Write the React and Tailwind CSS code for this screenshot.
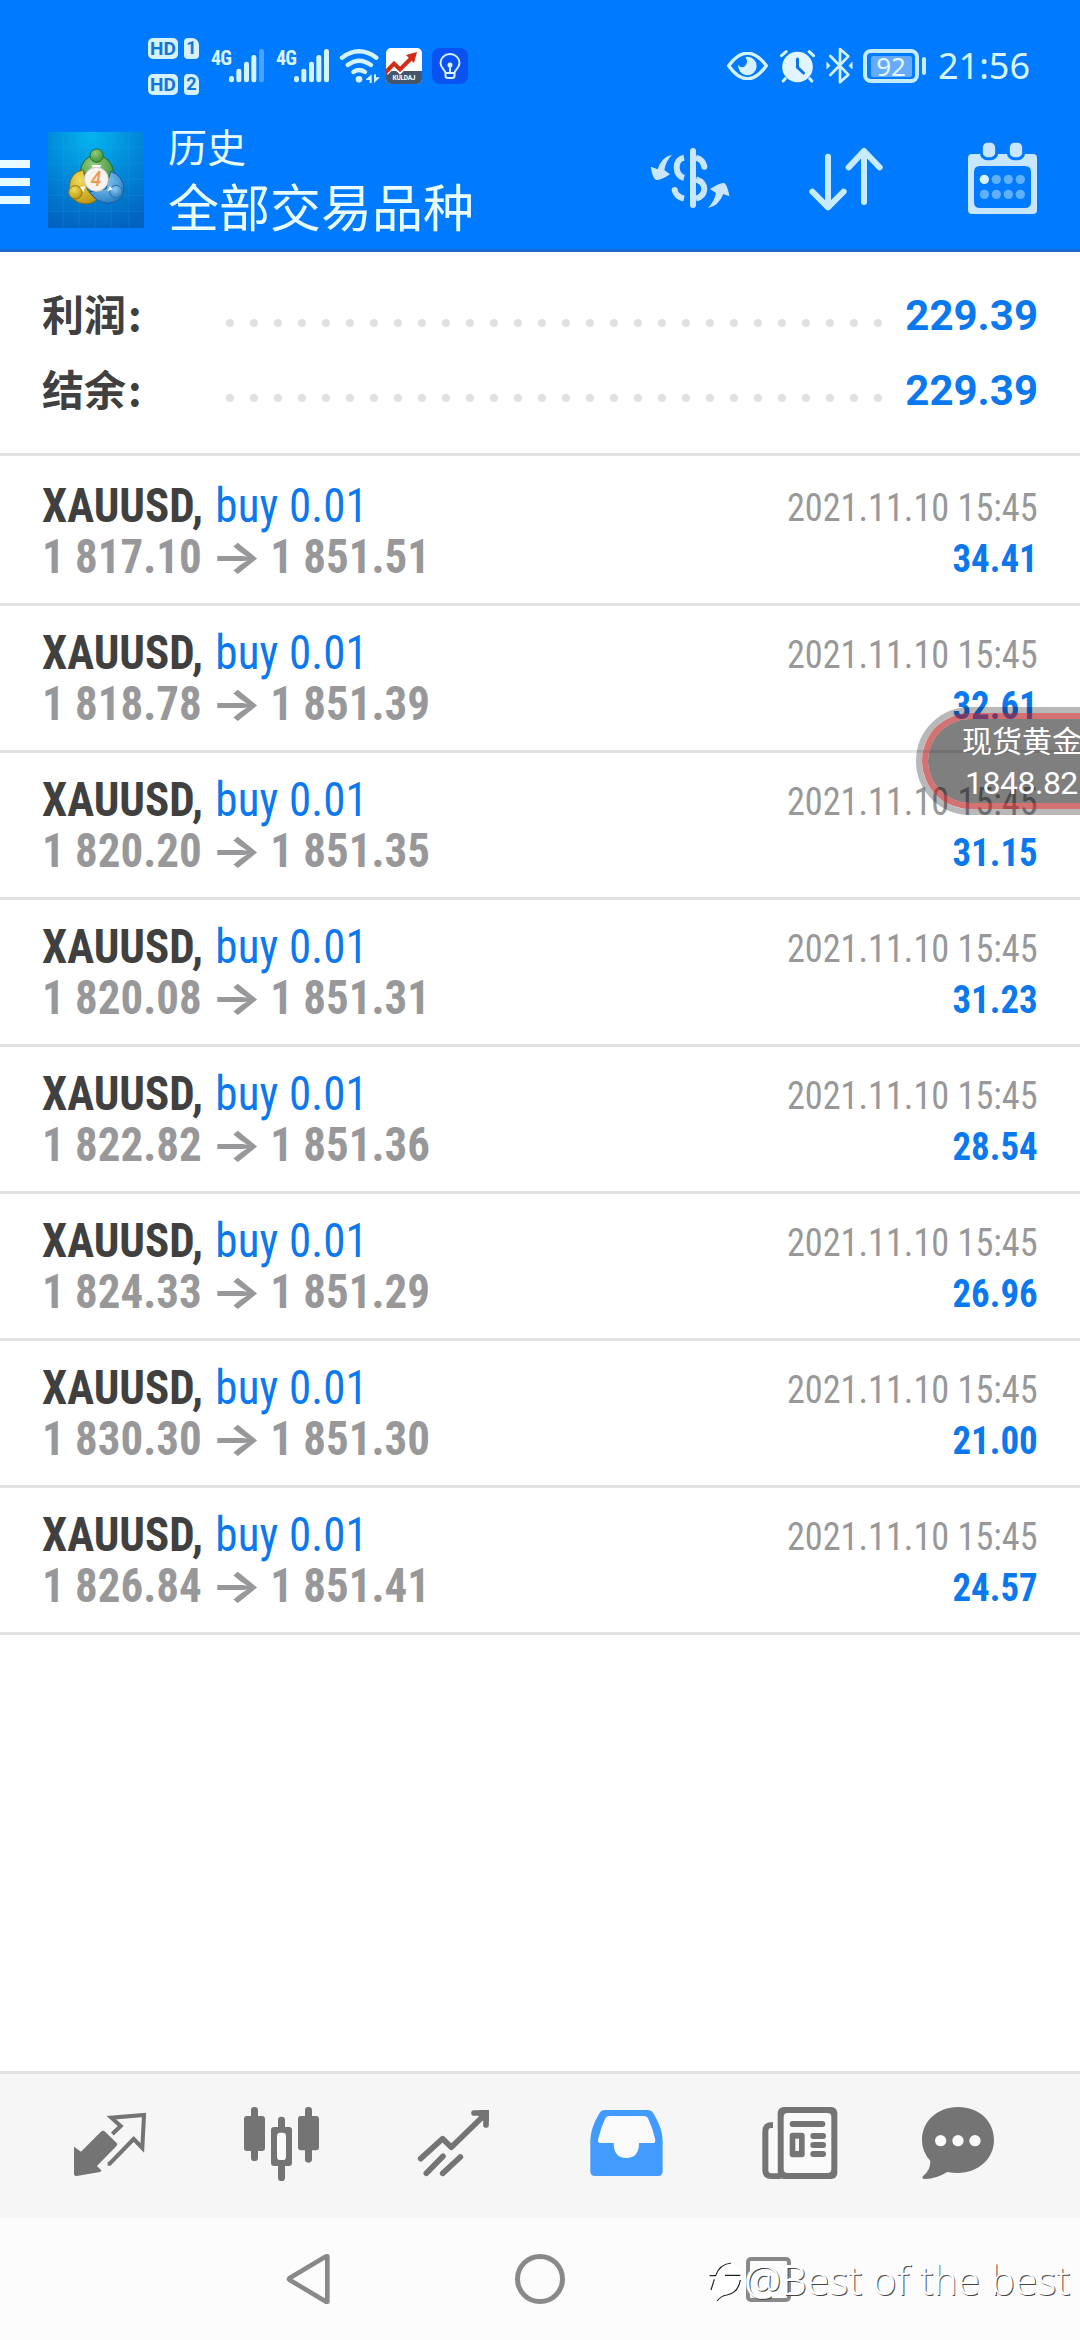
import React from "react";

const deals = [
  ["1 817.10", "1 851.51", "34.41"],
  ["1 818.78", "1 851.39", "32.61"],
  ["1 820.20", "1 851.35", "31.15"],
  ["1 820.08", "1 851.31", "31.23"],
  ["1 822.82", "1 851.36", "28.54"],
  ["1 824.33", "1 851.29", "26.96"],
  ["1 830.30", "1 851.30", "21.00"],
  ["1 826.84", "1 851.41", "24.57"],
];

function SimBadge({ n }) {
  return (
    <div className="flex gap-[6px]">
      <div className="flex h-[21px] w-[30px] items-center justify-center rounded-[5px] bg-[#d5f1fe] font-['Roboto'] text-[19px] leading-none font-bold text-[#1275dc]">
        HD
      </div>
      <div className="flex h-[21px] w-[15px] items-center justify-center rounded-[4px] rounded-tr-[7px] bg-[#d5f1fe] font-['Roboto'] text-[18px] leading-none font-bold text-[#1275dc]">
        {n}
      </div>
    </div>
  );
}

function Signal({ className, weak }) {
  return (
    <div className={"flex h-[34px] " + className}>
      <span className="w-[18px] font-['Roboto'] text-[20px] leading-[18px] font-bold tracking-[-0.8px] text-[#d9f4ff] [font-stretch:75%]">4G</span>
      <svg width="35" height="34" viewBox="297 86 105 102" fill="#d5f3ff">
        <rect x="297" y="167" width="15" height="19" rx="7" />
        <rect x="319" y="145" width="15" height="41" rx="7" />
        <rect x="342" y="124" width="15" height="62" rx="7" />
        <rect x="364" y="104" width="15" height="82" rx="7" />
        <rect x="387" y="86" width="15" height="100" rx="7" opacity={weak ? 0.35 : 1} />
      </svg>
    </div>
  );
}

function StatusBar() {
  return (
    <div className="flex h-[132px] items-center pl-[148px]">
      <div className="flex flex-col gap-[15px]">
        <SimBadge n="1" />
        <SimBadge n="2" />
      </div>
      <Signal className="ml-[12px]" weak />
      <Signal className="ml-[12px]" />
      <svg className="ml-[10px]" width="42" height="34" viewBox="626 86 126 102" fill="none" stroke="#d5f3ff" strokeWidth="13" strokeLinecap="round">
        <path d="M635 112Q686 74 738 112" />
        <path d="M652 134Q686 108 722 134" />
        <path d="M669 155Q686 143 704 155" />
        <circle cx="686" cy="177" r="10" fill="#d5f3ff" stroke="none" />
        <path d="M707 177L724 162V188H718V179H707ZM731 162V188L749 171H737V162Z" fill="#d5f3ff" stroke="none" />
      </svg>
      <svg className="ml-[5px]" width="36" height="36" viewBox="0 0 36 36">
        <defs>
          <clipPath id="appclip"><rect width="36" height="36" rx="5" /></clipPath>
        </defs>
        <g clipPath="url(#appclip)">
          <rect width="36" height="36" fill="#fff" />
          <rect y="23" width="36" height="13" fill="#43566e" />
          <path d="M-1 24L8 15L14 21L26 9" fill="none" stroke="#fff" strokeWidth="8" />
          <path d="M-1 25L8 15.500L14 21.500L26 9.500" fill="none" stroke="#d32b15" strokeWidth="4" />
          <path d="M20 7L31 4L28 15Z" fill="#d32b15" />
          <text x="18" y="32" textAnchor="middle" fontFamily="Roboto" fontSize="6.500" fontWeight="700" textLength="23" fill="#fff">KULDAJ</text>
        </g>
      </svg>
      <svg className="ml-[10px]" width="36" height="36" viewBox="0 0 36 36" fill="none" stroke="#d9f4ff" strokeWidth="2" strokeLinecap="round" strokeLinejoin="round">
        <rect width="36" height="36" rx="8" fill="#0b52f2" stroke="none" />
        <path d="M13.500 25C13.500 22 8.500 20 8.500 15A9.500 9 0 0 1 27.500 15C27.500 20 22.500 22 22.500 25ZM13.500 25V28Q13.500 30 16 30H20Q22.500 30 22.500 28V25M18 18V25" />
        <circle cx="18" cy="17" r="1.500" fill="#d9f4ff" />
      </svg>

      <svg className="ml-[259px]" width="41" height="28" viewBox="50 68 124 84">
        <path d="M55 109Q112 33 169 109Q112 189 55 109Z" fill="none" stroke="#d5f3ff" strokeWidth="10" strokeLinejoin="round" />
        <path d="M112 82A28 28 0 1 1 84 106Q92 118 104 111Q116 101 106 83Q109 82 112 82Z" fill="#d5f3ff" />
      </svg>
      <svg className="ml-[11px]" width="37" height="34" viewBox="207 58 110 102" fill="none" stroke="#d5f3ff" strokeLinecap="round">
        <circle cx="262" cy="112" r="46" fill="#e0f5ff" stroke="none" />
        <path d="M214 78L228 66M310 78L297 66M225 147L219 154M299 147L305 154" strokeWidth="9" />
        <path d="M262 88V113L280 130" stroke="#0a74e8" strokeWidth="9" />
      </svg>
      <svg className="ml-[10px]" width="27" height="38" viewBox="346 53 81 114" fill="none" stroke="#d5f3ff" strokeWidth="8" strokeLinecap="round" strokeLinejoin="round">
        <path d="M359 80L413 136L388 159V59L413 81L359 137" />
        <path d="M349 99L358 109L349 118ZM424 99L415 109L424 118Z" strokeWidth="2" fill="#d5f3ff" />
      </svg>
      <div className="ml-[10px] flex h-[34px] w-[56px] items-center justify-center rounded-[8px] border-4 border-[#c5ebff] p-[3px]">
        <div className="flex h-[21px] w-[41px] items-center justify-center rounded-[2px] bg-[#67abfb] font-['Noto_Sans'] text-[26px] leading-none text-[#e4f8ff]">92</div>
      </div>
      <div className="ml-[3px] h-[18px] w-[4px] rounded-full bg-[#c5ebff]" />
      <div className="ml-[12px] font-['Noto_Sans'] text-[36px] leading-[40px] text-[#d9f5ff]">21:56</div>
    </div>
  );
}

function AppLogo() {
  return (
    <svg className="ml-[18px]" width="96" height="96" viewBox="144 66 288 288">
      <defs>
        <radialGradient id="lbg" cx=".45" cy=".05" r="1">
          <stop offset="0" stopColor="#05b4ee" />
          <stop offset=".5" stopColor="#0287d8" />
          <stop offset="1" stopColor="#0262bd" />
        </radialGradient>
        <radialGradient id="lgr" cx=".4" cy=".3" r=".8"><stop offset="0" stopColor="#93cc7b" /><stop offset="1" stopColor="#2f8a34" /></radialGradient>
        <radialGradient id="lye" cx=".4" cy=".3" r=".8"><stop offset="0" stopColor="#f3dc5c" /><stop offset="1" stopColor="#b9920c" /></radialGradient>
        <radialGradient id="lbl" cx=".4" cy=".3" r=".8"><stop offset="0" stopColor="#8cccf5" /><stop offset="1" stopColor="#1f78c0" /></radialGradient>
      </defs>
      <rect x="144" y="66" width="288" height="288" fill="url(#lbg)" />
      <path d="M190 66V354M238 66V354M286 66V354M334 66V354M386 66V354M144 112H432M144 160H432M144 208H432M144 256H432M144 304H432" stroke="#35b5f5" strokeOpacity=".14" strokeWidth="3" />
      <g strokeWidth="3">
        <path d="M240 190Q244 140 289 134Q334 140 342 190Q342 215 326 228L290 170L262 190Z" fill="url(#lgr)" stroke="#23682c" />
        <path d="M250 180Q210 186 208 232Q210 280 258 282Q282 280 290 268L262 240Z" fill="url(#lye)" stroke="#7e6a18" />
        <path d="M332 184Q370 196 372 240Q368 276 324 280Q290 278 268 246L318 236Z" fill="url(#lbl)" stroke="#1a5c99" />
        <circle cx="290" cy="137" r="20" fill="url(#lgr)" stroke="#2a7430" />
        <circle cx="226" cy="247" r="20" fill="url(#lye)" stroke="#8c7212" />
        <circle cx="348" cy="245" r="19" fill="url(#lbl)" stroke="#2770ad" />
        <path d="M274 165H304L296 180H282ZM240 232L256 228L250 246ZM330 228L338 238L322 244Z" fill="#fff" stroke="none" />
        <circle cx="289" cy="208" r="36" fill="#f7f3ee" stroke="#cfc8c0" />
      </g>
      <text x="288" y="229" textAnchor="middle" fontFamily="Roboto" fontSize="58" fontWeight="500" fontStyle="italic" fill="#f29a4d">4</text>
    </svg>
  );
}

function Header() {
  return (
    <header className="h-[252px] w-full border-b-[3px] border-[#1a6bd2] bg-[#007aff]">
      <StatusBar />
      <div className="flex h-[96px] items-center">
        <div className="mt-[4px] flex w-[30px] flex-col gap-[10px]">
          <div className="h-[8px] bg-[#e6fbff]" />
          <div className="h-[8px] bg-[#e6fbff]" />
          <div className="h-[8px] bg-[#e6fbff]" />
        </div>
        <AppLogo />
        <div className="ml-[24px] flex w-[321px] flex-col font-['Noto_Sans_CJK_SC',sans-serif] whitespace-nowrap text-[#e9fcff]">
          <div className="mt-[-2px] text-[39px] leading-[54px]">历史</div>
          <div className="mb-[2px] text-[51px] leading-[66px]">全部交易品种</div>
        </div>
        <svg className="ml-[161px]" width="80" height="76" viewBox="60 66 240 228" fill="none" stroke="#c9e6ff" strokeWidth="18" strokeLinecap="round">
          <path d="M189 93V255" />
          <path d="M162 113Q140 118 140 143Q141 168 162 174M198 113Q218 118 223 140M134 210Q138 230 162 236M198 178Q223 186 223 208Q221 230 198 236" strokeLinecap="butt" />
          <circle cx="223" cy="140" r="9" fill="#c9e6ff" stroke="none" />
          <circle cx="134" cy="210" r="9" fill="#c9e6ff" stroke="none" />
          <g fill="#c9e6ff" stroke="none">
            <path d="M126 104Q94 110 83 148L63 140Q62 141 66 158Q70 176 80 180Q92 182 120 163L103 150Q107 124 126 104Z" />
            <path d="M234 264Q266 258 280 222L298 229Q298 224 294 210Q289 192 282 189Q270 187 240 207L258 219Q253 244 234 264Z" />
          </g>
        </svg>
        <svg className="ml-[78px]" width="76" height="76" viewBox="534 66 228 228" fill="none" stroke="#c9ebff" strokeWidth="18" strokeLinecap="round" strokeLinejoin="round">
          <path d="M594 110V262M547 215L594 262L641 215M702 246V93M656 142L702 93L749 142" />
        </svg>
        <svg className="ml-[84px]" width="70" height="76" viewBox="1014 66 210 228">
          <path fillRule="evenodd" d="M1026 102H1209Q1221 102 1221 114V270Q1221 282 1209 282H1026Q1014 282 1014 270V114Q1014 102 1026 102ZM1050 138Q1032 138 1032 156V246Q1032 264 1050 264H1185Q1203 264 1203 246V156Q1203 138 1185 138Z" fill="#c9e6ff" />
          <g fill="#c9e6ff" stroke="#007aff" strokeWidth="9">
            <rect x="1054" y="64" width="46" height="52" rx="18" />
            <rect x="1135" y="64" width="46" height="52" rx="18" />
          </g>
          <g fill="#5fb0ff">
            <circle cx="1063" cy="178" r="14" fill="#d5f3ff" />
            <circle cx="1099" cy="178" r="14" />
            <circle cx="1135" cy="178" r="14" />
            <circle cx="1171" cy="178" r="14" />
            <circle cx="1063" cy="223" r="14" />
            <circle cx="1099" cy="223" r="14" />
            <circle cx="1135" cy="223" r="14" />
            <circle cx="1171" cy="223" r="14" />
          </g>
        </svg>
      </div>
    </header>
  );
}

function SummaryLine({ label, value }) {
  return (
    <div className="flex h-[75px] items-center px-[42px]">
      <div className="mb-[5px] w-[184px] font-['Noto_Sans_CJK_SC',sans-serif] text-[42px] leading-[60px] font-bold text-[#404040]">
        {label}<span className="ml-[2px]">:</span>
      </div>
      <div className="mt-[14px] flex flex-1 gap-[16px]">
        {Array.from({ length: 28 }, (_, i) => (
          <span key={i} className="size-[8px] shrink-0 rounded-full bg-[#e1e1e1]" />
        ))}
      </div>
      <div className="font-['Roboto'] text-[42px] leading-[50px] font-bold text-[#0a78ee]">{value}</div>
    </div>
  );
}

function Deal({ open, close, profit }) {
  return (
    <div className="flex h-[147px] items-end justify-between border-b-[3px] border-[#e2e2e2] px-[42px] font-['Roboto'] whitespace-nowrap [font-stretch:75%]">
      <div className="origin-left scale-x-[0.937] pb-[21px] text-[48px] leading-[51px]">
        <div>
          <span className="font-bold text-[#404040]">XAUUSD,</span>
          <span className="ml-[2px] tracking-[0.15px] text-[#0a78ee]"> buy 0.01</span>
        </div>
        <div className="flex font-bold text-[#98989a]">
          <span>{open}</span>
          <span className="w-[73px] scale-x-[1.32] text-center font-['Inter'] text-[44px] [font-stretch:100%]">→</span>
          <span>{close}</span>
        </div>
      </div>
      <div className="pb-[18px] text-right text-[39px] leading-[51px]">
        <div className="origin-right scale-x-[0.93] text-[#98989a]">2021.11.10 15:45</div>
        <div className="origin-right scale-x-[0.945] font-bold text-[#0a78ee]">{profit}</div>
      </div>
    </div>
  );
}

function TabBar() {
  return (
    <nav className="flex h-[147px] items-center border-t-[3px] border-[#e2e2e2] bg-[#f6f6f6] pl-[72px]">
      <svg width="76" height="80" viewBox="96 138 228 240" fill="#747474">
        <path d="M102 260L123 275L182 216Q189 209 196 216L230 249Q234 253 230 257L171 318L184 331Q184 335 180 336L110 348Q102 348 102 341Z" />
        <path d="M217 222L242 198L214 173L312 165L307 264L281 237L209 311H203" fill="none" stroke="#747474" strokeWidth="12" />
      </svg>
      <svg className="ml-[92px]" width="82" height="80" viewBox="600 138 246 240" fill="#747474">
        <rect x="633" y="141" width="21" height="162" rx="10" />
        <rect x="612" y="168" width="63" height="105" rx="9" />
        <rect x="795" y="141" width="21" height="167" rx="10" />
        <rect x="774" y="168" width="63" height="103" rx="9" />
        <rect x="714" y="170" width="21" height="193" rx="10" />
        <rect x="693" y="201" width="63" height="117" rx="9" />
        <rect x="711" y="218" width="27" height="82" rx="10" fill="#fafafa" />
      </svg>
      <svg className="ml-[92px]" width="78" height="80" viewBox="1122 138 234 240" fill="none" stroke="#747474" strokeWidth="17" strokeLinecap="round">
        <path d="M1142 296L1208 236L1234 262L1334 164" strokeLinejoin="round" />
        <path d="M1302 159H1338V195" />
        <path d="M1318 150H1347V182L1334 186L1310 162Z" fill="#747474" stroke="none" />
        <path d="M1159 340L1209 289M1208 340L1261 291" />
      </svg>
      <svg className="ml-[95px]" width="79" height="80" viewBox="141 138 237 240">
        <path d="M194 150H322Q334 150 340 160Q368 206 368 242V334Q368 348 354 348H165Q151 348 151 334V242Q151 206 178 160Q184 150 194 150Z" fill="#429bff" />
        <path d="M208 168H312Q320 168 324 175Q338 204 346 239Q347 249 338 249H297Q297 294 259 294Q221 294 221 249H182Q173 249 174 239Q182 204 196 175Q200 168 208 168Z" fill="#fafafa" />
      </svg>
      <svg className="ml-[93px]" width="81" height="80" viewBox="657 138 243 240" fill="#747474">
        <path d="M699 186V204H693Q685 204 685 214V331Q685 340 694 340H722V357H694Q667 357 667 330V214Q667 186 699 186Z" />
        <rect x="713" y="141" width="179" height="216" rx="18" />
        <rect x="731" y="159" width="143" height="180" rx="12" fill="#fafafa" />
        <path d="M687 210H712V339H700Q687 339 687 328Z" fill="#fafafa" />
        <rect x="749" y="183" width="107" height="18" rx="9" />
        <rect x="749" y="218" width="45" height="74" rx="9" />
        <rect x="766" y="236" width="11" height="37" fill="#fafafa" />
        <rect x="811" y="219" width="47" height="18" rx="9" />
        <rect x="811" y="246" width="47" height="18" rx="9" />
        <rect x="811" y="273" width="47" height="18" rx="9" />
      </svg>
      <svg className="ml-[79px]" width="78" height="80" viewBox="1137 138 234 240">
        <path d="M1254 141C1320 141 1362 186 1362 240C1362 296 1314 339 1254 339Q1238 339 1222 336Q1190 356 1155 357Q1142 356 1150 347Q1172 330 1171 303Q1146 276 1146 240C1146 184 1192 141 1254 141Z" fill="#747474" />
        <circle cx="1202" cy="242" r="17" fill="#fafafa" />
        <circle cx="1254" cy="242" r="17" fill="#fafafa" />
        <circle cx="1305" cy="242" r="17" fill="#fafafa" />
      </svg>
    </nav>
  );
}

function SystemNav() {
  return (
    <div className="relative flex h-[122px] items-center bg-[#fcfcfc] pl-[286px]">
      <svg width="46" height="54" viewBox="108 126 138 162" fill="none" stroke="#898989" strokeWidth="14" strokeLinejoin="round">
        <path d="M232 139V275Q229 276 226 274L118 209Q116 207 118 205L226 140Q229 138 232 139Z" />
      </svg>
      <div className="ml-[183px] size-[50px] rounded-full border-[5px] border-[#898989]" />
      <div className="ml-[181px] size-[45px] rounded-[5px] border-[4.5px] border-[#898989]" />
      <div className="absolute top-[33px] left-[709px] flex items-center">
        <svg width="36" height="50" viewBox="208 140 108 150" fill="#ffffff">
          <path d="M214 206L232 200Q248 166 276 167Q296 176 302 200Q304 236 280 256Q262 266 248 266L232 280L240 262L214 250L226 216Z" />
          <path d="M210 205H228Q238 172 274 167M224 216L214 248M256 204H302M302 218Q296 256 262 263Q246 264 232 281" fill="none" stroke="#222" strokeWidth="3.500" />
        </svg>
        <span className="origin-left scale-x-[0.99] font-['Noto_Sans'] text-[41px] leading-[56px] font-light whitespace-nowrap text-white [text-shadow:1px_1px_0.5px_#444,-1px_-1px_0_#fff]">@Best of the best</span>
      </div>
    </div>
  );
}

export default function App() {
  return (
    <div className="relative flex h-[2340px] w-[1080px] flex-col overflow-hidden bg-white">
      <Header />
      <section className="flex h-[204px] flex-col border-b-[3px] border-[#e2e2e2] pt-[26px]">
        <SummaryLine label="利润" value="229.39" />
        <SummaryLine label="结余" value="229.39" />
      </section>
      <main className="flex-1 pt-[3px]">
        {deals.map(([open, close, profit]) => (
          <Deal key={open} open={open} close={close} profit={profit} />
        ))}
      </main>
      <TabBar />
      <SystemNav />
      <div className="absolute top-[707px] left-[916px] h-[108px] w-[220px] rounded-full border-[6px] border-black/28">
        <div className="h-full w-full rounded-full border-[6px] border-[#b51414]/60 bg-black/50 bg-clip-padding">
          <div className="pt-[1px] pl-[34px] whitespace-nowrap text-white">
            <div className="font-['Noto_Sans_CJK_SC',sans-serif] text-[30px] leading-[38px]">现货黄金</div>
            <div className="pl-[3px] font-['Roboto'] text-[32px] leading-[50px] tracking-[-0.5px]">1848.82</div>
          </div>
        </div>
      </div>
    </div>
  );
}
